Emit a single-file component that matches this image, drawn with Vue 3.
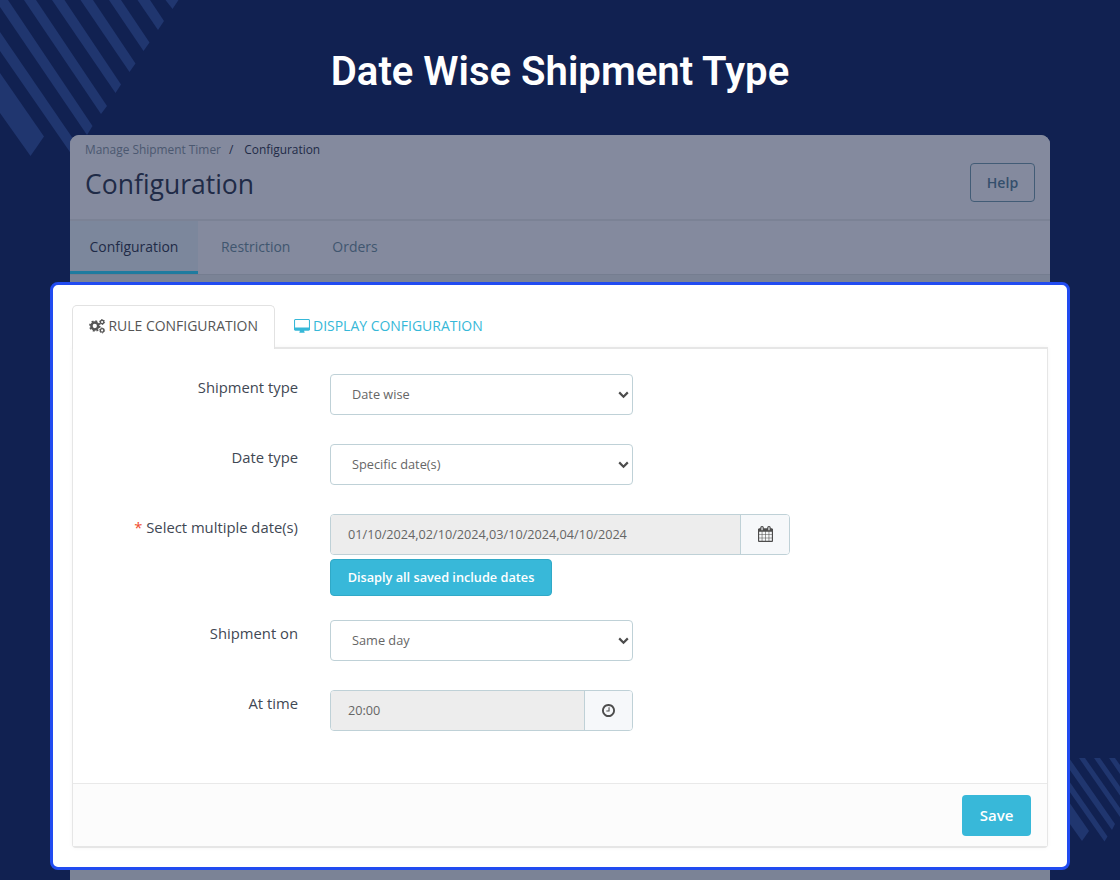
<script setup>
const stripes = [
  '0,73 44,136.5 30.5,156 0,113',
  '0,32 78,146 72,155 0,51',
  '0,0 8,0 92.5,126 87,135 0,7',
  '24,0 36,0 107,106 101,114',
  '52,0 64.5,0 121,84.5 115.5,93',
  '80.5,0 93,0 135.5,63.5 129.5,72',
  '109,0 121,0 149.5,42.5 143.5,51',
  '137.5,0 150,0 164,21 158,30',
  '165.5,0 178.5,0 172.5,9',
  '1060,789 1089,831 1082,841 1060,810',
  '1060,768 1107.5,836.5 1104.5,841.5 1060,778',
  '1060,745 1115,824 1112,830 1060,756',
  '1079,758 1085,758 1120,808 1120,817',
  '1094,758 1100,758 1120,786.5 1120,795.5',
  '1109,758 1115,758 1120,765 1120,774'
]
const pageTabs = ['Configuration', 'Restriction', 'Orders']
</script>

<template>
  <div class="stage">
    <svg class="stripes" width="1120" height="880" viewBox="0 0 1120 880">
      <clipPath id="lower"><rect x="0" y="0" width="1000" height="880" /><rect x="1000" y="758" width="120" height="122" /></clipPath>
      <g clip-path="url(#lower)"><polygon v-for="s in stripes" :key="s" :points="s" /></g>
    </svg>
    <h1 class="headline">Date Wise Shipment Type</h1>

    <div class="page">
      <header class="page-head">
        <div>
          <div class="crumbs"><span class="parent">Manage Shipment Timer</span><span class="slash">/</span><span>Configuration</span></div>
          <h2>Configuration</h2>
        </div>
        <button class="help">Help</button>
      </header>
      <nav class="page-tabs">
        <a v-for="(t, i) in pageTabs" :key="t" :class="{ active: i === 0 }">{{ t }}</a>
      </nav>
    </div>

    <section class="modal">
      <div class="tabs">
        <a class="tab current">
          <svg class="cogs" width="17" height="16" viewBox="0 0 17 16" fill="none" stroke="#555">
            <circle cx="5.8" cy="8" r="3.4" stroke-width="2.5" />
            <circle cx="5.8" cy="8" r="4.9" stroke-width="1.7" stroke-dasharray="1.92 1.92" />
            <circle cx="13.1" cy="4" r="1.75" stroke-width="1.3" />
            <circle cx="13.1" cy="4" r="2.5" stroke-width="1" stroke-dasharray="1.31 1.31" />
            <circle cx="13.1" cy="12.4" r="1.75" stroke-width="1.3" />
            <circle cx="13.1" cy="12.4" r="2.5" stroke-width="1" stroke-dasharray="1.31 1.31" />
          </svg>
          <span>RULE CONFIGURATION</span>
        </a>
        <a class="tab">
          <svg class="desktop" width="16" height="14" viewBox="-64 0 1920 1680" fill="#36b8d8"><path d="M1728 992v-832q0-13-9.5-22.5t-22.5-9.5h-1600q-13 0-22.5 9.5t-9.5 22.5v832q0 13 9.5 22.5t22.5 9.5h1600q13 0 22.5-9.5t9.5-22.5zm128-832v1088q0 66-47 113t-113 47h-544q0 37 16 77.5t32 71 16 43.5q0 26-19 45t-45 19h-512q-26 0-45-19t-19-45q0-14 16-44t32-70 16-78h-544q-66 0-113-47t-47-113v-1088q0-66 47-113t113-47h1600q66 0 113 47t47 113z" /></svg>
          <span>DISPLAY CONFIGURATION</span>
        </a>
      </div>
      <div class="panel">
        <div class="form">
          <div class="row">
            <label>Shipment type</label>
            <div class="select"><span>Date wise</span><svg width="11" height="8" viewBox="0 0 11 8"><path d="M1.2 1.4 5.5 5.7 9.8 1.4" /></svg></div>
          </div>
          <div class="row">
            <label>Date type</label>
            <div class="select"><span>Specific date(s)</span><svg width="11" height="8" viewBox="0 0 11 8"><path d="M1.2 1.4 5.5 5.7 9.8 1.4" /></svg></div>
          </div>
          <div class="row dates">
            <label><b>*</b> Select multiple date(s)</label>
            <div class="stack">
              <div class="group wide">
                <span class="value">01/10/2024,02/10/2024,03/10/2024,04/10/2024</span>
                <span class="addon"><svg width="15" height="16" viewBox="64 0 1664 1792" preserveAspectRatio="none"><path d="M192 1664h288v-288h-288v288zm352 0h320v-288h-320v288zm-352-352h288v-320h-288v320zm352 0h320v-320h-320v320zm-352-384h288v-288h-288v288zm736 736h320v-288h-320v288zm-384-736h320v-288h-320v288zm768 736h288v-288h-288v288zm-384-352h320v-320h-320v320zm-352-864v-288q0-13-9.5-22.5t-22.5-9.5h-64q-13 0-22.5 9.5t-9.5 22.5v288q0 13 9.5 22.5t22.5 9.5h64q13 0 22.5-9.5t9.5-22.5zm736 864h288v-320h-288v320zm-384-384h320v-288h-320v288zm384 0h288v-288h-288v288zm32-480v-288q0-13-9.5-22.5t-22.5-9.5h-64q-13 0-22.5 9.5t-9.5 22.5v288q0 13 9.5 22.5t22.5 9.5h64q13 0 22.5-9.5t9.5-22.5zm384-64v1280q0 52-38 90t-90 38h-1408q-52 0-90-38t-38-90v-1280q0-52 38-90t90-38h128v-96q0-66 47-113t113-47h64q66 0 113 47t47 113v96h384v-96q0-66 47-113t113-47h64q66 0 113 47t47 113v96h128q52 0 90 38t38 90z" /></svg></span>
              </div>
              <button class="saved">Disaply all saved include dates</button>
            </div>
          </div>
          <div class="row">
            <label>Shipment on</label>
            <div class="select"><span>Same day</span><svg width="11" height="8" viewBox="0 0 11 8"><path d="M1.2 1.4 5.5 5.7 9.8 1.4" /></svg></div>
          </div>
          <div class="row">
            <label>At time</label>
            <div class="group">
              <span class="value">20:00</span>
              <span class="addon"><svg width="13" height="13" viewBox="128 128 1536 1536"><path d="M1024 544v448q0 14-9 23t-23 9h-320q-14 0-23-9t-9-23v-64q0-14 9-23t23-9h224v-352q0-14 9-23t23-9h64q14 0 23 9t9 23zm416 352q0-148-73-273t-198-198-273-73-273 73-198 198-73 273 73 273 198 198 273 73 273-73 198-198 73-273zm224 0q0 209-103 385.5t-279.5 279.5-385.5 103-385.5-103-279.5-279.5-103-385.5 103-385.5 279.5-279.5 385.5-103 385.5 103 279.5 279.5 103 385.5z" /></svg></span>
            </div>
          </div>
        </div>
        <footer><button class="save">Save</button></footer>
      </div>
    </section>
  </div>
</template>

<style>
body { margin: 0; background: #112151; }
</style>

<style scoped>
* { box-sizing: border-box; }
.stage { position: relative; width: 1120px; height: 880px; overflow: hidden; background: #112151; font-family: "Open Sans", sans-serif; display: flex; flex-direction: column; align-items: center; }
.stripes { position: absolute; left: 0; top: 0; fill: #20366f; }
button { font-family: inherit; padding: 0; cursor: pointer; }
.headline { margin: 0; height: 135px; padding-top: 48px; font: 600 40.1px/47px Roboto, sans-serif; color: #fff; white-space: nowrap; }

.page { position: relative; width: 980px; flex: 1; background: #7b8396; border-radius: 9px 9px 0 0; overflow: hidden; color: #1f2b47; }
.page-head { display: flex; justify-content: space-between; height: 86px; padding: 0 15px; background: #848a9e; border-bottom: 2px solid #7b8295; }
.crumbs { margin-top: 6px; font-size: 11.9px; line-height: 17px; display: flex; }
.crumbs .parent { color: #4b5870; }
.crumbs .slash { margin: 0 11px 0 8px; }
h2 { margin: 7px 0 0; font-size: 26.5px; line-height: 38px; font-weight: 400; }
.help { width: 65px; height: 39px; margin-top: 28px; border: 1.5px solid #425c76; border-radius: 4px; background: transparent; color: #344f6c; font-size: 14.1px; font-weight: 600; }
.page-tabs { display: flex; height: 54px; background: #848a9e; border-bottom: 1px solid #757d90; }
.page-tabs a { padding: 0 23px; line-height: 51px; font-size: 13.95px; color: #40566f; }
.page-tabs a.active { width: 128px; padding: 0 0 0 19.5px; color: #1f2b47; background: #7c879c; border-bottom: 3px solid #1f7b9f; }
.page-tabs a:last-child { padding-left: 19px; }

.modal { position: absolute; left: 50px; top: 282px; width: 1020px; height: 588px; border: 3px solid #214bf0; border-radius: 8px; background: #fff; padding: 20px 19px 0; display: flex; flex-direction: column; }
.tabs { position: relative; z-index: 1; display: flex; height: 44px; margin-bottom: -2px; }
.tab { display: flex; padding: 0 19px; line-height: 42px; font-size: 13.97px; color: #36b8d8; white-space: nowrap; }
.tab.current { width: 203px; padding: 0 0 0 16px; color: #555; background: #fff; border: 1px solid #e2e2e2; border-bottom: 0; border-radius: 5px 5px 0 0; line-height: 40px; }
.tab span { margin-left: 3px; }
.tab.current span { margin-left: 2.4px; }
.cogs { margin-top: 12px; }
.desktop { margin-top: 14px; }
.panel { width: 976px; height: 501px; border: 1.5px solid #e6e6e6; border-top-width: 2px; border-bottom-width: 2px; border-radius: 0 0 4px 4px; box-shadow: 0 0 5px rgba(0,0,0,.04); display: flex; flex-direction: column; }
.form { flex: 1; display: flex; flex-direction: column; gap: 29px; padding: 25px 0 0 27px; }
.row { display: flex; align-items: flex-start; }
.row.dates { margin-bottom: -5px; }
label { width: 198px; margin-right: 32px; padding-top: 3px; text-align: right; font-size: 14.8px; line-height: 21px; color: #3f4854; white-space: nowrap; }
label b { color: #f04b2d; font-weight: 400; }
.select, .group { display: flex; align-items: center; width: 303.4px; height: 41px; border: 1.5px solid #bfd1d7; border-radius: 4px; font-size: 12.75px; color: #666; overflow: hidden; }
.select { justify-content: space-between; padding: 0 3px 0 21px; line-height: 17px; }
.select svg { fill: none; stroke: #4d4d4d; stroke-width: 2.2; }
.group { font-size: 12.68px; }
.group.wide { width: 460px; }
.value { flex: 1; align-self: stretch; padding-left: 17px; line-height: 39px; background: #ededed; white-space: nowrap; }
.addon { width: 48px; height: 100%; display: flex; align-items: center; justify-content: center; background: #f6f8fa; border-left: 1px solid #bfd1d7; }
.group.wide .addon { width: 49px; padding-bottom: 1px; }
.addon svg { fill: #4d4d4d; }
.stack { display: flex; flex-direction: column; gap: 4px; }
.saved { width: 222px; height: 37px; padding-bottom: 1px; border: 1px solid #30a9c7; border-radius: 4px; background: #38b8d9; color: #fff; font-size: 12.72px; font-weight: 600; }
footer { height: 63px; padding: 11px 16px 0; display: flex; justify-content: flex-end; background: #fcfcfc; border-top: 1px solid #e9e9e9; }
.save { width: 69px; height: 41px; padding-bottom: 1px; border: 0; border-radius: 4px; background: #38b8d9; color: #fff; font-size: 15px; font-weight: 600; }
</style>
